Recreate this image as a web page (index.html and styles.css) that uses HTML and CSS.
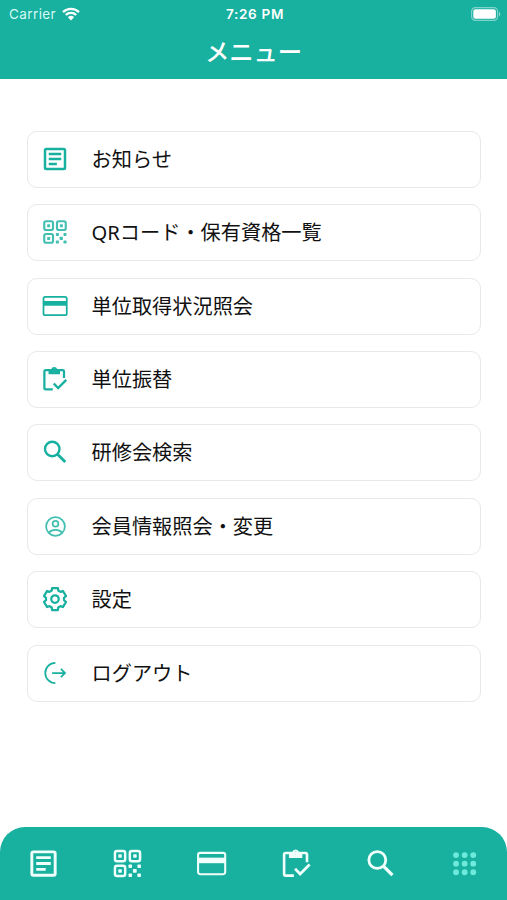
FILE: index.html
```
<!DOCTYPE html>
<html lang="ja">
<head>
    <meta charset="UTF-8">
    <meta name="viewport" content="width=device-width, initial-scale=1.0">
    <title>メニュー</title>
    <link rel="stylesheet" href="styles.css">
</head>
<body>
    <!-- Icon definitions -->
    <svg class="icon-defs" aria-hidden="true">
        <symbol id="icon-news" viewBox="0 0 24 24">
            <rect x="4" y="4" width="16" height="16" rx="1" fill="none" stroke="currentColor" stroke-width="2"/>
            <path d="M7 8h10M7 12h10M7 16h6.5" fill="none" stroke="currentColor" stroke-width="1.9"/>
        </symbol>
        <symbol id="icon-qr" viewBox="0 0 24 24">
            <g fill="none" stroke="currentColor" stroke-width="1.7">
                <rect x="3.4" y="3.4" width="7" height="7" rx="1.4"/>
                <rect x="13.6" y="3.4" width="7" height="7" rx="1.4"/>
                <rect x="3.4" y="13.6" width="7" height="7" rx="1.4"/>
            </g>
            <g fill="currentColor">
                <rect x="5.7" y="5.7" width="2.4" height="2.4" rx=".5"/>
                <rect x="15.9" y="5.7" width="2.4" height="2.4" rx=".5"/>
                <rect x="5.7" y="15.9" width="2.4" height="2.4" rx=".5"/>
                <rect x="12.7" y="12.7" width="2.4" height="2.4" rx=".5"/>
                <rect x="18.8" y="12.7" width="2.4" height="2.4" rx=".5"/>
                <rect x="15.7" y="15.7" width="2.6" height="2.6" rx=".5"/>
                <rect x="12.7" y="18.8" width="2.4" height="2.4" rx=".5"/>
                <rect x="18.8" y="18.8" width="2.4" height="2.4" rx=".5"/>
            </g>
        </symbol>
        <symbol id="icon-card" viewBox="0 0 24 24">
            <rect x="2.8" y="4.7" width="18.6" height="14.6" rx="1.4" fill="none" stroke="currentColor" stroke-width="1.4"/>
            <path d="M2.5 8h19v3.8h-19z" fill="currentColor"/>
        </symbol>
        <symbol id="icon-clipboard" viewBox="0 0 24 24">
            <path d="M10.2 20.3H4.6a1.1 1.1 0 0 1-1.1-1.1V5.9a1.1 1.1 0 0 1 1.1-1.1h13.5a1.1 1.1 0 0 1 1.1 1.1v5.3" fill="none" stroke="currentColor" stroke-width="1.8"/>
            <path d="M11 15.6l3.5 3.6 6.5-6.5" fill="none" stroke="currentColor" stroke-width="1.9"/>
            <path fill-rule="evenodd" d="M6.8 8.2v-4h2.2a2.5 2.5 0 0 1 4.8 0h2.2v4zM11.4 3.7a1 1 0 1 0 0 2 1 1 0 0 0 0-2z" fill="currentColor"/>
        </symbol>
        <symbol id="icon-search" viewBox="0 0 24 24">
            <circle cx="9.8" cy="9.6" r="5.8" fill="none" stroke="currentColor" stroke-width="1.9"/>
            <path d="M14 13.8l6.2 6.2" fill="none" stroke="currentColor" stroke-width="2.3"/>
        </symbol>
        <symbol id="icon-person" viewBox="0 0 24 24">
            <g fill="none" stroke="currentColor" stroke-width="1.4">
                <circle cx="12.4" cy="12.4" r="7.5"/>
                <circle cx="12.4" cy="10.1" r="2.3"/>
                <path d="M7.1 17.4c1.2-1.7 3.1-2.3 5.3-2.3s4.1.6 5.3 2.3"/>
            </g>
        </symbol>
        <symbol id="icon-gear" viewBox="-12 -12 24 24">
            <g fill="none" stroke="currentColor" stroke-width="1.8" stroke-linejoin="round">
                <path d="M-2.3-8.8H2.3L2.6-6.8 4.4-5.7 6.4-6.4 8.8-2.3 7.2-1V1L8.800 2.300 6.400 6.400 4.400 5.700 2.600 6.800 2.300 8.800H-2.300L-2.600 6.800-4.400 5.700-6.400 6.400-8.800 2.300-7.200 1V-1L-8.800-2.300-6.400-6.400-4.400-5.700-2.600-6.800z"/>
                <circle r="3"/>
            </g>
        </symbol>
        <symbol id="icon-logout" viewBox="0 0 24 24">
            <path d="M12.3 3.9a8.1 8.1 0 0 0 0 16.2M9.7 12h10.2M16.7 8.7L20 12l-3.3 3.3" fill="none" stroke="currentColor" stroke-width="1.4"/>
        </symbol>
        <symbol id="icon-grid" viewBox="0 0 24 24">
            <g fill="currentColor">
                <circle cx="6.2" cy="6.2" r="2"/><circle cx="12.1" cy="6.2" r="2"/><circle cx="18" cy="6.2" r="2"/>
                <circle cx="6.2" cy="12.1" r="2"/><circle cx="12.1" cy="12.1" r="2"/><circle cx="18" cy="12.1" r="2"/>
                <circle cx="6.2" cy="18" r="2"/><circle cx="12.1" cy="18" r="2"/><circle cx="18" cy="18" r="2"/>
            </g>
        </symbol>
    </svg>

    <header class="header">
        <div class="status-bar">
            <div class="carrier">
                <span>Carrier</span>
                <svg class="wifi" viewBox="0 0 18 14">
                    <path d="M1 5.1a11.4 11.4 0 0 1 16 0M3.8 8a7.4 7.4 0 0 1 10.4 0" fill="none" stroke="currentColor" stroke-width="2.3"/>
                    <path d="M9 13.5l-3.1-3.2a4.5 4.5 0 0 1 6.2 0z" fill="currentColor"/>
                </svg>
            </div>
            <span class="time">7:26 PM</span>
            <svg class="battery" viewBox="0 0 30 14">
                <rect x=".6" y=".6" width="26" height="12.8" rx="3.8" fill="none" stroke="currentColor" stroke-opacity=".45" stroke-width="1.2"/>
                <rect x="2.3" y="2.3" width="22.6" height="9.4" rx="2.2" fill="currentColor"/>
                <path d="M28 4.7c1.8.8 1.8 3.8 0 4.6z" fill="currentColor" fill-opacity=".5"/>
            </svg>
        </div>
        <h1>メニュー</h1>
    </header>

    <main class="menu">
        <a class="menu-item" href="#"><svg class="icon"><use href="#icon-news"/></svg><span>お知らせ</span></a>
        <a class="menu-item" href="#"><svg class="icon soft"><use href="#icon-qr"/></svg><span>QRコード・保有資格一覧</span></a>
        <a class="menu-item" href="#"><svg class="icon"><use href="#icon-card"/></svg><span>単位取得状況照会</span></a>
        <a class="menu-item" href="#"><svg class="icon"><use href="#icon-clipboard"/></svg><span>単位振替</span></a>
        <a class="menu-item" href="#"><svg class="icon"><use href="#icon-search"/></svg><span>研修会検索</span></a>
        <a class="menu-item" href="#"><svg class="icon soft"><use href="#icon-person"/></svg><span>会員情報照会・変更</span></a>
        <a class="menu-item" href="#"><svg class="icon"><use href="#icon-gear"/></svg><span>設定</span></a>
        <a class="menu-item" href="#"><svg class="icon"><use href="#icon-logout"/></svg><span>ログアウト</span></a>
    </main>

    <nav class="tab-bar">
        <a href="#" aria-label="お知らせ"><svg class="tab-icon"><use href="#icon-news"/></svg></a>
        <a href="#" aria-label="QRコード"><svg class="tab-icon"><use href="#icon-qr"/></svg></a>
        <a href="#" aria-label="単位取得状況照会"><svg class="tab-icon"><use href="#icon-card"/></svg></a>
        <a href="#" aria-label="単位振替"><svg class="tab-icon"><use href="#icon-clipboard"/></svg></a>
        <a href="#" aria-label="研修会検索"><svg class="tab-icon"><use href="#icon-search"/></svg></a>
        <a href="#" class="active" aria-label="メニュー"><svg class="tab-icon"><use href="#icon-grid"/></svg></a>
    </nav>
</body>
</html>
```
FILE: styles.css
```
* {
    margin: 0;
    padding: 0;
    box-sizing: border-box;
}

body {
    height: 100vh;
    display: flex;
    flex-direction: column;
    background: #fff;
    font-family: 'Noto Sans', 'Noto Sans CJK JP', sans-serif;
    overflow: hidden;
}

a {
    color: inherit;
    text-decoration: none;
}

.icon-defs {
    display: none;
}

/* Header */
.header {
    height: 79px;
    flex-shrink: 0;
    background: #18b09f;
    color: #fff;
}

.status-bar {
    height: 27px;
    padding: 0 6px 0 9px;
    display: grid;
    grid-template-columns: 1fr auto 1fr;
    align-items: center;
    font-family: Inter, sans-serif;
    font-size: 13.5px;
}

.carrier {
    display: flex;
    align-items: center;
    gap: 6px;
    color: #d5fbf4;
    letter-spacing: 0.4px;
}

.wifi {
    width: 18px;
    height: 14px;
    color: #fff;
}

.time {
    font-weight: 600;
    letter-spacing: 0.7px;
}

.battery {
    width: 30px;
    height: 14px;
    justify-self: end;
}

.header h1 {
    font-size: 24.3px;
    font-weight: 500;
    line-height: 48px;
    text-align: center;
    font-family: 'Noto Sans CJK JP', sans-serif;
}

/* Menu list */
.menu {
    flex: 1;
    display: flex;
    flex-direction: column;
    gap: 16.4px;
    padding: 51.8px 26px 0 26.5px;
}

.menu-item {
    height: 57px;
    display: flex;
    align-items: center;
    gap: 22px;
    padding: 0 12px 1px;
    border: 1.5px solid #e8e8e8;
    border-radius: 10px;
    color: #111;
    font-size: 20.2px;
    line-height: 28px;
}

.icon {
    width: 30px;
    height: 30px;
    color: #18b09f;
}

.icon.soft {
    color: #43bfb1;
}

/* Bottom tabs */
.tab-bar {
    height: 73px;
    flex-shrink: 0;
    display: grid;
    grid-template-columns: repeat(6, 1fr);
    padding-left: 1px;
    background: #18b09f;
    border-radius: 25px 25px 0 0;
    color: #effffc;
}

.tab-bar a {
    display: flex;
    align-items: center;
    justify-content: center;
}

.tab-icon {
    width: 35px;
    height: 35px;
}

.tab-bar .active {
    color: #6eeadd;
}
```
